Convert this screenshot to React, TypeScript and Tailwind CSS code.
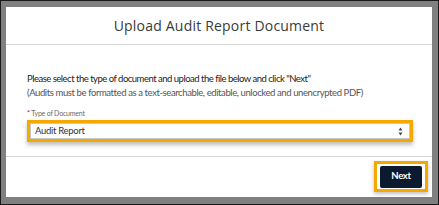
import React from 'react';

const App: React.FC = () => {
  return (
    <div className="w-[439px] h-[205px] bg-[#808080] border border-[#1a1a1a] pt-[6px] pl-[5px] overflow-hidden">
      {/* Modal */}
      <div className="w-[426px] h-[190px] bg-white flex flex-col">
        {/* Header */}
        <div className="h-[38px] border-b border-[#d4d4d4] flex items-center justify-center">
          <h2 className="text-[14px] text-[#3a3a3a] tracking-[0.2px] font-['Open_Sans',sans-serif]">
            Upload Audit Report Document
          </h2>
        </div>

        {/* Body */}
        <div className="h-[112px] border-b border-[#d4d4d4] pl-[21px] pr-[14px] pt-[27px] font-['Lato',sans-serif]">
          <p className="text-[9.5px] leading-[14px] tracking-[-0.5px] text-[#222]">
            Please select the type of document and upload the file below and click "Next"
          </p>
          <p className="text-[9.5px] leading-[14px] tracking-[-0.4px] text-[#555]">
            (Audits must be formatted as a text-searchable, editable, unlocked and unencrypted PDF)
          </p>
          <div className="mt-[9px] text-[7px] leading-[9px] tracking-[-0.2px] text-[#6b6b6b]">
            <span className="text-[#d40000]">*</span> Type of Document
          </div>
          <div className="mt-[2px] w-[386px] border-[3px] border-[#f5a800] shadow-[0_3px_4px_rgba(0,0,0,0.25)]">
            <div className="h-[16px] bg-white border border-[#c8c8c8] flex items-center justify-between pl-[4px] pr-[6px]">
              <span className="text-[9.5px] tracking-[-0.3px] text-[#333]">Audit Report</span>
              <svg width="5" height="9" viewBox="0 0 5 9">
                <path d="M2.5 0.5 L4.5 3.5 L0.5 3.5 Z" fill="#444" />
                <path d="M2.5 8.5 L4.5 5.5 L0.5 5.5 Z" fill="#444" />
              </svg>
            </div>
          </div>
        </div>

        {/* Footer */}
        <div className="flex-1 flex items-start justify-end pt-[4px] pr-[4px]">
          <div className="border-[3px] border-[#f5a800] px-[3px] py-[1.5px] shadow-[0_2px_4px_rgba(0,0,0,0.25)]">
            <button className="block w-[42px] h-[22px] bg-[#0b1a2e] rounded-[2px] text-white text-[9.5px] font-bold tracking-[-0.3px] font-['Lato',sans-serif]">
              Next
            </button>
          </div>
        </div>
      </div>
    </div>
  );
};

export default App;
